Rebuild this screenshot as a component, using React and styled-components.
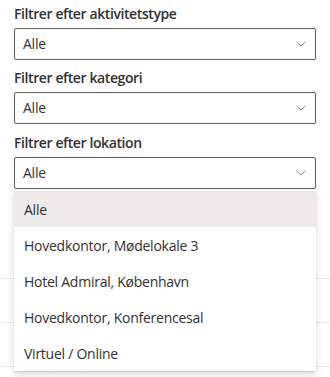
import React from "react";
import styled, { createGlobalStyle } from "styled-components";

const GlobalStyle = createGlobalStyle`
  body {
    margin: 0;
    background: #ffffff;
    font-family: "Open Sans", "Noto Sans", sans-serif;
    color: #323130;
  }
`;

const Page = styled.div`
  position: relative;
  width: 330px;
  min-height: 377px;
  overflow: hidden;
`;

const Filters = styled.div`
  display: flex;
  flex-direction: column;
  padding: 0 14px;
`;

const Field = styled.div`
  position: relative;
  display: flex;
  flex-direction: column;
  margin-top: ${p => p.$gap || 0}px;
`;

const Label = styled.label`
  display: block;
  padding: 4px 0;
  font-size: 14px;
  font-weight: 600;
  line-height: 20px;
  letter-spacing: -0.4px;
  color: #323130;
`;

const Select = styled.div`
  box-sizing: border-box;
  display: flex;
  align-items: center;
  justify-content: space-between;
  height: 32px;
  padding: 0 9px 0 8px;
  border: 1px solid #605e5c;
  border-radius: 2px;
  font-size: 14px;
  line-height: 30px;
  letter-spacing: -0.25px;
  color: #323130;
  background: #ffffff;
`;

const Callout = styled.div`
  position: absolute;
  left: 0;
  right: 0;
  top: 62px;
  display: flex;
  flex-direction: column;
  background: #ffffff;
  border-radius: 2px;
  box-shadow: 0 3.2px 7.2px rgba(0, 0, 0, 0.132),
    0 0.6px 1.8px rgba(0, 0, 0, 0.108);
  z-index: 2;
`;

const Option = styled.div`
  height: 36px;
  display: flex;
  align-items: center;
  padding: 0 10px;
  font-size: 14px;
  letter-spacing: -0.25px;
  color: #323130;
  background: ${p => (p.$selected ? "#edebe9" : "#ffffff")};
`;

const List = styled.div`
  margin-top: 46px;
  display: flex;
  flex-direction: column;
`;

const Row = styled.div`
  height: 43px;
  border-bottom: 1px solid #edebe9;
`;

const Chevron = () => (
  <svg width="10" height="6" viewBox="0 0 10 6" fill="none">
    <polyline
      points="0.5,0.8 5,5 9.5,0.8"
      stroke="#8a8886"
      strokeWidth="1"
    />
  </svg>
);

const locations = [
  "Alle",
  "Hovedkontor, Mødelokale 3",
  "Hotel Admiral, København",
  "Hovedkontor, Konferencesal",
  "Virtuel / Online"
];

const Dropdown = ({ value }) => (
  <Select>
    <span>{value}</span>
    <Chevron />
  </Select>
);

export default function App() {
  return (
    <Page>
      <GlobalStyle />
      <Filters>
        <Field>
          <Label>Filtrer efter aktivitetstype</Label>
          <Dropdown value="Alle" />
        </Field>
        <Field $gap={4}>
          <Label>Filtrer efter kategori</Label>
          <Dropdown value="Alle" />
        </Field>
        <Field $gap={5}>
          <Label>Filtrer efter lokation</Label>
          <Dropdown value="Alle" />
          <Callout>
            {locations.map((loc, i) => (
              <Option key={loc} $selected={i === 0}>
                {loc}
              </Option>
            ))}
          </Callout>
        </Field>
      </Filters>
      <List>
        <Row />
        <Row />
        <Row />
      </List>
    </Page>
  );
}
